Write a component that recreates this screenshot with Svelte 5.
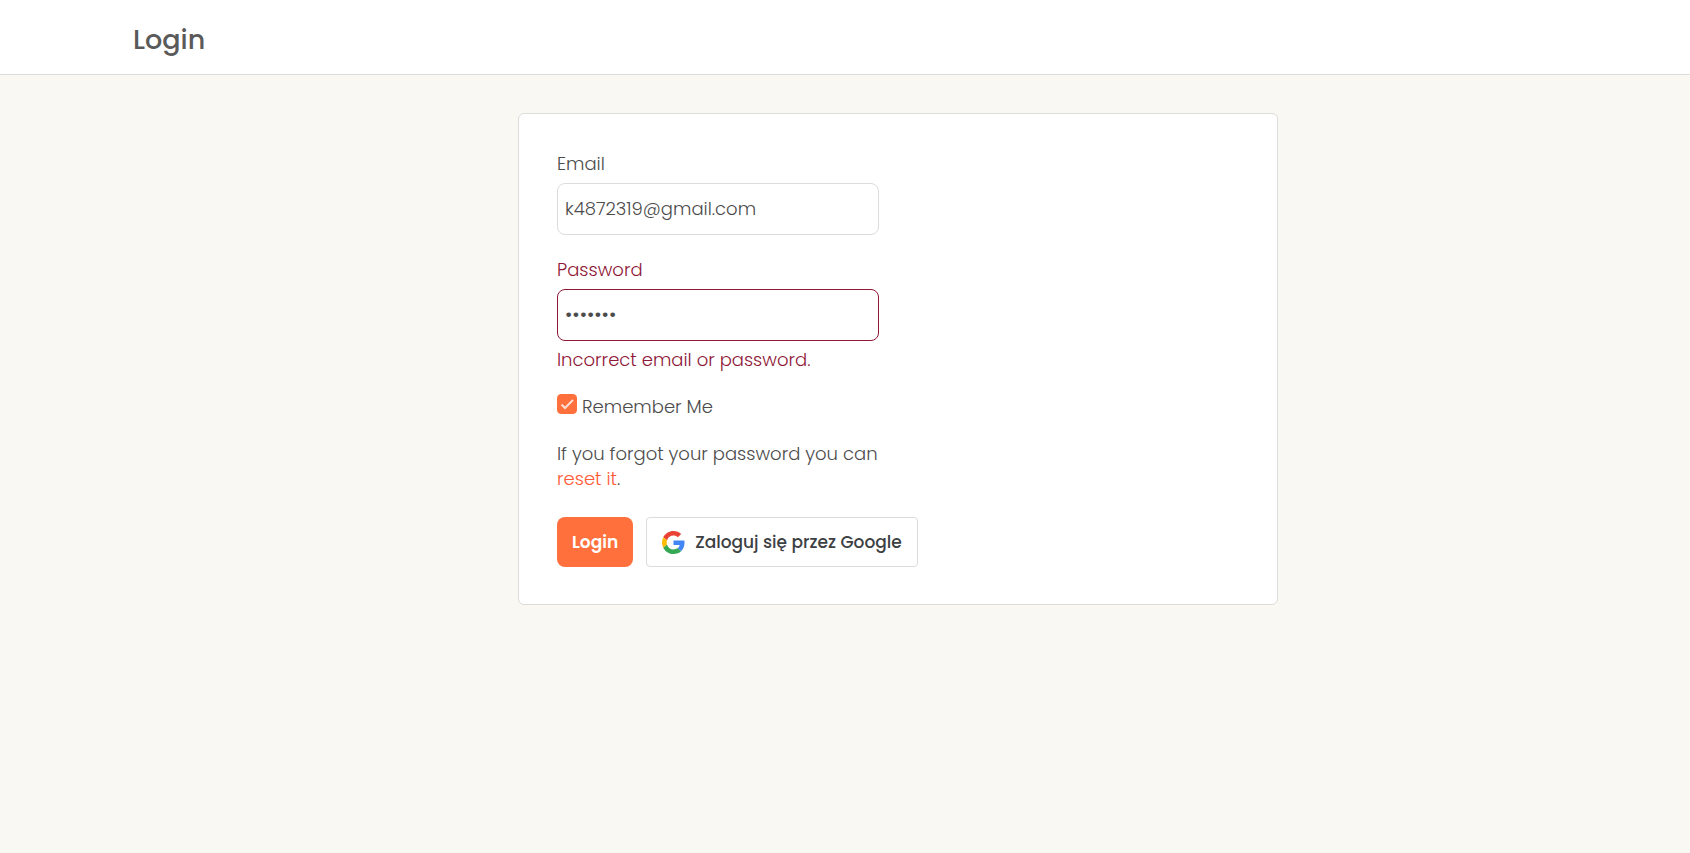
<script>
  let email = $state('k4872319@gmail.com');
  let password = $state('secret7');
  let remember = $state(true);
</script>

<header>
  <div class="container">
    <h1>Login</h1>
  </div>
</header>

<main class="container">
  <form class="card" onsubmit={(e) => e.preventDefault()}>
    <div class="fields">
      <div class="field">
        <label for="email">Email</label>
        <input id="email" type="email" bind:value={email} />
      </div>
      <div class="field invalid">
        <label for="password">Password</label>
        <input
          id="password"
          type="password"
          bind:value={password}
          aria-invalid="true"
          aria-describedby="password-error"
        />
        <p id="password-error">Incorrect email or password.</p>
      </div>
      <div class="remember">
        <input id="remember" type="checkbox" bind:checked={remember} />
        <label for="remember">Remember Me</label>
      </div>
      <p>If you forgot your password you can <a href="#reset">reset it</a>.</p>
    </div>

    <div class="actions">
      <button class="login" type="submit">Login</button>
      <button class="google" type="button">
        <svg viewBox="0 0 48 48" aria-hidden="true">
          <path fill="#EA4335" d="M24 9.5c3.54 0 6.71 1.22 9.21 3.6l6.85-6.85C35.9 2.38 30.47 0 24 0 14.62 0 6.51 5.38 2.56 13.22l7.98 6.19C12.43 13.72 17.74 9.5 24 9.5z" />
          <path fill="#4285F4" d="M46.98 24.55c0-1.57-.15-3.09-.38-4.55H24v9.02h12.94c-.58 2.96-2.26 5.48-4.78 7.18l7.73 6c4.51-4.18 7.09-10.36 7.09-17.65z" />
          <path fill="#FBBC05" d="M10.53 28.59c-.48-1.45-.76-2.99-.76-4.59s.27-3.14.76-4.59l-7.98-6.19C.92 16.46 0 20.12 0 24c0 3.88.92 7.54 2.56 10.78l7.97-6.19z" />
          <path fill="#34A853" d="M24 48c6.48 0 11.93-2.13 15.89-5.81l-7.73-6c-2.15 1.45-4.92 2.3-8.16 2.3-6.26 0-11.57-4.22-13.47-9.91l-7.98 6.19C6.51 42.62 14.62 48 24 48z" />
        </svg>
        <span>Zaloguj się przez Google</span>
      </button>
    </div>
  </form>
</main>

<style>
  :global(body) {
    margin: 0;
    background: #f9f8f3;
    color: #4c4c4c;
    font-family: Poppins, Inter, sans-serif;
    font-size: 18px;
    font-weight: 300;
    line-height: 25px;
  }

  .container {
    box-sizing: border-box;
    width: 100%;
    max-width: 1464px;
    margin: 0 auto;
    padding: 0 20px;
  }

  header {
    padding: 22px 0 16px;
    background: #fff;
    border-bottom: 1px solid #dcdcdc;
  }

  h1 {
    margin: 0;
    color: #5a5a5a;
    font-size: 27px;
    font-weight: 500;
    line-height: 36px;
  }

  main {
    display: grid;
    grid-template-columns: minmax(0, 345px) minmax(0, 760px);
    column-gap: 40px;
  }

  .card {
    box-sizing: border-box;
    grid-column: 2;
    margin: 38px 0;
    padding: 37px 38px;
    background: #fff;
    border: 1px solid #dcdcdc;
    border-radius: 6px;
  }

  .fields {
    display: flex;
    flex-direction: column;
    gap: 22px;
    max-width: 322px;
  }

  .field {
    display: flex;
    flex-direction: column;
  }

  .field input {
    box-sizing: border-box;
    width: 100%;
    height: 52px;
    margin: 7px 0 0;
    padding: 0 7px 2px;
    background: #fff;
    border: 1px solid #dcdcdc;
    border-radius: 8px;
    color: #4c4c4c;
    font: inherit;
  }

  .field p {
    padding-top: 6px;
  }

  .invalid {
    color: #8f1838;
  }

  .field.invalid input {
    border-color: #8f1838;
    font-size: 20px;
  }

  p {
    margin: 0;
  }

  .remember {
    display: flex;
    gap: 5px;
  }

  .remember input {
    appearance: none;
    width: 20px;
    height: 20px;
    margin: 0;
    border: 1px solid #dcdcdc;
    border-radius: 4px;
  }

  .remember input:checked {
    background: #ff703c url("data:image/svg+xml,%3Csvg xmlns='http://www.w3.org/2000/svg' viewBox='0 0 20 20'%3E%3Cpath d='M4.5 10.5l3.5 3.5 8-8' fill='none' stroke='%23ffe0d4' stroke-width='2'/%3E%3C/svg%3E") center / 20px 20px;
    border-color: #ff703c;
  }

  a {
    color: #ff5a36;
    text-decoration: none;
  }

  .actions {
    display: flex;
    flex-wrap: wrap;
    gap: 13px;
    margin-top: 26px;
  }

  button {
    box-sizing: border-box;
    height: 50px;
    padding: 0 15px;
    font: inherit;
    font-size: 17px;
    font-weight: 500;
    cursor: pointer;
  }

  .login {
    background: #ff703c;
    border: 0;
    border-radius: 8px;
    color: #fff;
    font-weight: 600;
  }

  .google {
    display: flex;
    align-items: center;
    gap: 10px;
    background: #fff;
    border: 1px solid #dcdcdc;
    border-radius: 4px;
    color: #3c4043;
  }

  .google svg {
    width: 23px;
    height: 23px;
  }
</style>
